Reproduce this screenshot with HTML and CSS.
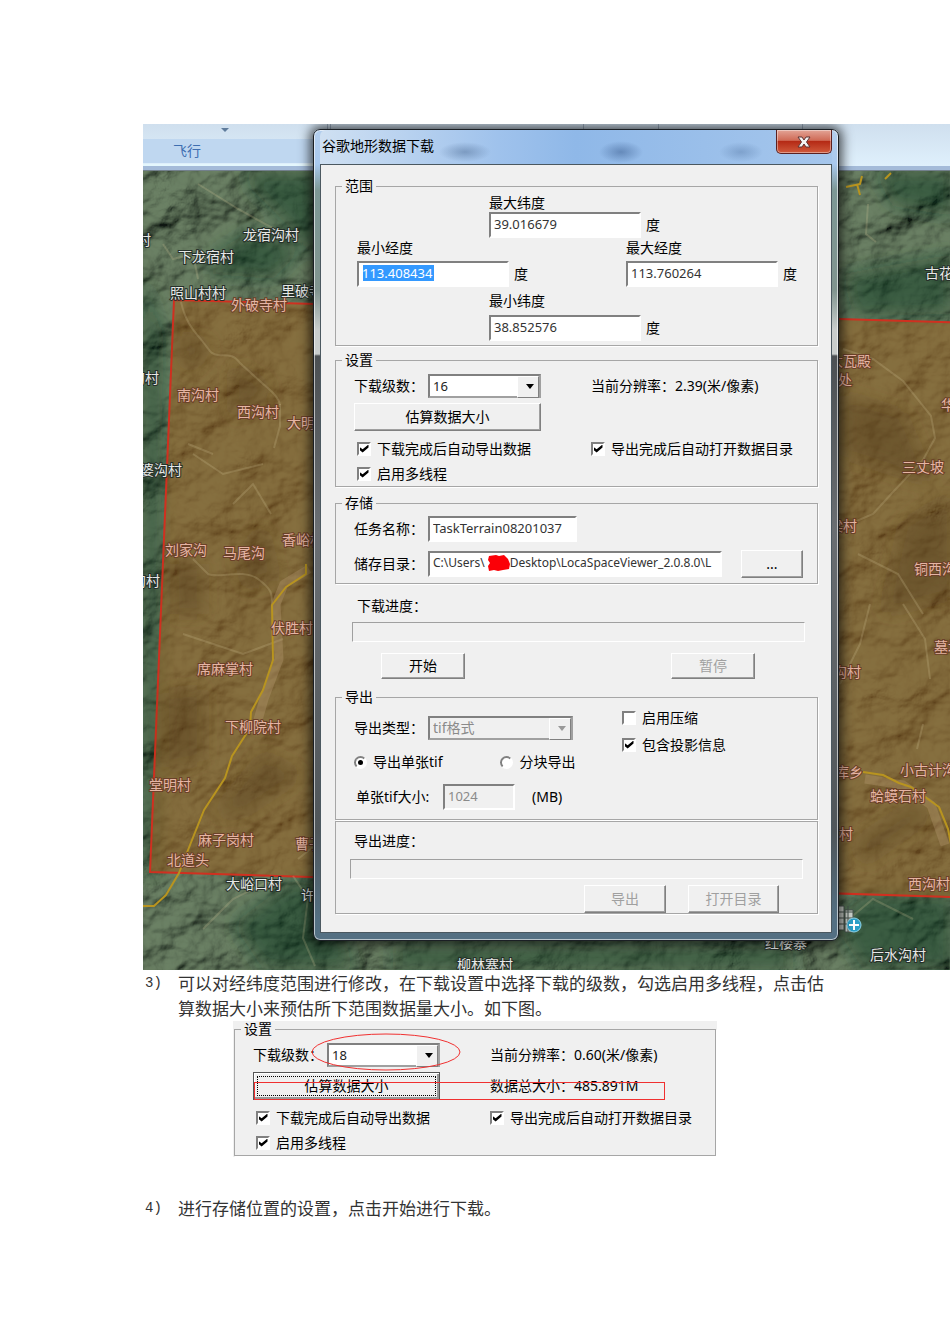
FILE: index.html
```html
<!DOCTYPE html>
<html lang="zh-CN">
<head>
    <meta charset="UTF-8">
    <meta name="viewport" content="width=device-width, initial-scale=1.0">
    <title>谷歌地形数据下载</title>
    <link rel="stylesheet" href="styles.css">
</head>
<body>
<main class="doc">
    <section class="desktop">
        <svg class="map" aria-hidden="true">
            <defs>
                <filter id="relief" x="0" y="0" width="100%" height="100%">
                    <feTurbulence type="fractalNoise" baseFrequency="0.018 0.022" numOctaves="4" seed="11"/>
                    <feColorMatrix values="0 0 0 0 0  0 0 0 0 0  0 0 0 0 0  1 0 0 0 0"/>
                    <feDiffuseLighting surfaceScale="17" lighting-color="#869a78">
                        <feDistantLight azimuth="225" elevation="50"/>
                    </feDiffuseLighting>
                </filter>
                <filter id="soft" x="-50%" y="-50%" width="200%" height="200%"><feGaussianBlur stdDeviation="9"/></filter>
                <linearGradient id="ribbon" x1="0" y1="0" x2="0" y2="1">
                    <stop offset="0" stop-color="#cfdfee"/>
                    <stop offset="1" stop-color="#dff0fc"/>
                </linearGradient>
            </defs>
            <rect width="100%" height="100%" filter="url(#relief)"/>
            <rect width="100%" height="100%" fill="#2f4a38" opacity=".3"/>
            <!-- forest patches -->
            <g fill="#0d3a22" opacity=".5" filter="url(#soft)">
                <path d="M100 47h80v90l-40-40-30-30z"/>
                <path d="M70 130l40-25 50 20-30 30-60-5z"/>
                <path d="M0 150l20 60-5 540H0z"/>
                <path d="M730 47h80v45l-60-10zM700 150l110-20v60l-100 2z"/>
                <path d="M90 800l60-45 40 10 20 80h-90z"/>
                <path d="M690 800l30-30h90v75h-90zM250 822h400v23H250z"/>
            </g>
            <!-- download range -->
            <path class="range" d="M31 176L1607 221V798L7 748z"/>
            <g fill="#4b3513" opacity=".4" filter="url(#soft)">
                <path d="M90 440l30-40 15 60zM90 240l40 25-40 30zM20 570l40-5v70l-40 10zM70 690l50-60 40 20-60 40z"/>
                <path d="M30 210l40 10-25 30zM30 440h30v50H30zM95 430l30 10-20 30z"/>
                <path d="M700 270l60 20 30 70-90-30zM760 400l50-30v100l-70 20zM710 720l60-40 20 10-70 50z"/>
            </g>
            <g class="ridge">
                <path d="M38 178c5 22 14 30 22 40s8 12 15 13 15-2 22 8l22 20c9 8 17 14 18 22"/>
                <path d="M137 280v22l-6 22M50 435l15 15c10 5 35-6 50 5s14 15 14 28"/>
                <path d="M155 735l15-12M20 120l10 15 20-5 5 25M55 60l40 25 40 22 20 10"/>
                <path d="M150 752l15 22-5 40 12 28M60 805l30-30 40-20"/>
                <path d="M700 225l30 10 30 22 28 35 4 22-12 22-30 32-20 22-35 15"/>
                <path d="M697 560l20-40 10-40M715 430l40 20 25 40M760 480l22 35 5 40"/>
                <path d="M725 80l-2 30 10 8M780 600l-6 25M700 800l30-25 40 20"/>
                <path d="M50 330l30 20 40-10M70 330l-25-10M90 380l20-20 18 30M40 510l60 20 40-15"/>
            </g>
            <g class="valley">
                <path d="M166 445l-25 15-8 20 3 55-15 40-10 35"/>
                <path d="M722 655l38 6 28 20 14 40"/>
            </g>
            <g class="road">
                <path d="M163 440v10l-20 13-14 18 1 55-10 30-12 22-1 16-18 28-7 22-21 32-14 35-11 28-13 22-12 11H0"/>
                <path d="M720 648l20 3 16 8 12 4 28 20 9 22 4 20"/>
                <path d="M703 63l14-3 2-8M714 60l3 11M742 55l6-6"/>
            </g>
            <!-- place names -->
            <g class="place">
                <text x="-6" y="121">村</text>
                <text x="100" y="116">龙宿沟村</text>
                <text x="35" y="138">下龙宿村</text>
                <text x="27" y="174">照山村村</text>
                <text x="138" y="172">里破寺</text>
                <text x="-12" y="259">沟村</text>
                <text x="-17" y="351">婆婆沟村</text>
                <text x="-11" y="462">沟村</text>
                <text x="83" y="765">大峪口村</text>
                <text x="158" y="776">许</text>
                <text x="314" y="846">柳林寨村</text>
                <text x="622" y="824">红楼寨</text>
                <text x="782" y="154">古花寨</text>
                <text x="727" y="836">后水沟村</text>
            </g>
            <g class="place inside">
                <text x="88" y="186">外破寺村</text>
                <text x="34" y="276">南沟村</text>
                <text x="94" y="293">西沟村</text>
                <text x="144" y="304">大明村</text>
                <text x="22" y="431">刘家沟</text>
                <text x="80" y="434">马尾沟</text>
                <text x="139" y="421">香峪村</text>
                <text x="128" y="509">伏胜村</text>
                <text x="54" y="550">席麻掌村</text>
                <text x="82" y="608">下柳院村</text>
                <text x="6" y="666">堂明村</text>
                <text x="55" y="721">麻子岗村</text>
                <text x="24" y="741">北道头</text>
                <text x="152" y="725">曹子</text>
                <text x="686" y="242">大瓦殿</text>
                <text x="695" y="261">处</text>
                <text x="798" y="286">华</text>
                <text x="759" y="348">三丈坡</text>
                <text x="686" y="407">梁村</text>
                <text x="771" y="450">铜西沟村</text>
                <text x="791" y="528">墓地</text>
                <text x="690" y="553">沟村</text>
                <text x="692" y="653">库乡</text>
                <text x="757" y="651">小古计沟村</text>
                <text x="727" y="677">蛤蟆石村</text>
                <text x="682" y="715">石村</text>
                <text x="765" y="765">西沟村</text>
            </g>
            <!-- zoom-in marker -->
            <path d="M694 782h7v24h-7zM702 786h8v22h-8z" fill="#cdd3cd" stroke="#47524c"/>
            <path d="M694 788h16M694 794h16M694 800h16M705 782v26" stroke="#47524c" fill="none"/>
            <circle cx="711" cy="801" r="7" fill="#2ba0c8" stroke="#8fd3e8"/>
            <path d="M711 796v10M706 801h10" stroke="#fff" stroke-width="2"/>
            <!-- ribbon of the main window -->
            <rect width="100%" height="42" fill="url(#ribbon)"/>
            <rect y="15" width="190" height="24" fill="#bfd7f0"/>
            <rect y="40" width="190" height="2" fill="#e4f7fd"/>
            <rect y="42" width="100%" height="5" fill="#a4bbd9"/>
            <rect y="46" width="100%" height="1" fill="#73808c"/>
            <path d="M78 4h8l-4 4z" fill="#5f7c9c"/>
            <path d="M184.500 0v5M187.500 0v5M440.500 0v5M515.500 0v5M659.500 0v5" stroke="#9fb0c4"/>
            <text class="tab" x="30" y="32">飞行</text>
        </svg>

        <div class="dialog" role="dialog" aria-label="谷歌地形数据下载">
            <header class="titlebar">
                <span class="title">谷歌地形数据下载</span>
                <button class="close" type="button" aria-label="关闭">
                    <svg width="14" height="12" viewBox="0 0 14 12"><path d="M1 1h4l2 3 2-3h4L9.500 6 13 11H9L7 8l-2 3H1l3.500-5z" fill="#f4f4f4" stroke="#5c3434"/></svg>
                </button>
            </header>
            <form class="panel">
                <fieldset class="group">
                    <legend>范围</legend>
                    <div class="bounds">
                        <label class="north" for="lat-max">最大纬度</label>
                        <div class="coord north"><input class="text" id="lat-max" value="39.016679"><span>度</span></div>
                        <label class="west" for="lon-min">最小经度</label>
                        <label class="east" for="lon-max">最大经度</label>
                        <div class="coord west"><input class="text selected" id="lon-min" value="113.408434"><span>度</span></div>
                        <div class="coord east"><input class="text" id="lon-max" value="113.760264"><span>度</span></div>
                        <label class="south" for="lat-min">最小纬度</label>
                        <div class="coord south"><input class="text" id="lat-min" value="38.852576"><span>度</span></div>
                    </div>
                </fieldset>

                <fieldset class="group settings">
                    <legend>设置</legend>
                    <div class="settings-grid">
                        <div class="row">
                            <label class="name" for="level">下载级数：</label>
                            <span class="combo"><select id="level"><option>16</option></select></span>
                        </div>
                        <span>当前分辨率：2.39(米/像素)</span>
                        <button class="btn estimate" type="button">估算数据大小</button>
                        <span></span>
                        <label class="check"><input type="checkbox" checked>下载完成后自动导出数据</label>
                        <label class="check"><input type="checkbox" checked>导出完成后自动打开数据目录</label>
                        <label class="check"><input type="checkbox" checked>启用多线程</label>
                    </div>
                </fieldset>

                <fieldset class="group storage">
                    <legend>存储</legend>
                    <div class="row">
                        <label class="name" for="task">任务名称：</label>
                        <input class="text" id="task" value="TaskTerrain08201037">
                    </div>
                    <div class="row">
                        <label class="name" for="folder">储存目录：</label>
                        <span class="folder">
                            <input class="text" id="folder" value="C:\Users\        Desktop\LocaSpaceViewer_2.0.8.0\L">
                            <svg class="scribble" width="24" height="18" viewBox="0 0 24 18"><path d="M2 2l7-1 3 1 5-1 4 4 2 5-1 5-6 1-5 1-4-1-5 1-1-5 2-3-2-3z" fill="#fb0007"/></svg>
                        </span>
                        <button class="btn browse" type="button">...</button>
                    </div>
                </fieldset>

                <section class="download">
                    <span class="caption">下载进度：</span>
                    <div class="bar" role="progressbar" aria-label="下载进度"></div>
                    <div class="actions">
                        <button class="btn" type="button">开始</button>
                        <button class="btn" type="button" disabled>暂停</button>
                    </div>
                </section>

                <fieldset class="group export">
                    <legend>导出</legend>
                    <div class="export-grid">
                        <div class="export-left">
                            <div class="row">
                                <label class="name" for="format">导出类型：</label>
                                <span class="combo wide off"><select id="format" disabled><option>tif格式</option></select></span>
                            </div>
                            <div class="row modes">
                                <label class="radio"><input type="radio" name="mode" checked>导出单张tif</label>
                                <label class="radio"><input type="radio" name="mode">分块导出</label>
                            </div>
                            <div class="row size">
                                <label for="size">单张tif大小:</label>
                                <input class="text" id="size" value="1024" disabled>
                                <span>(MB)</span>
                            </div>
                        </div>
                        <div class="export-right">
                            <label class="check"><input type="checkbox">启用压缩</label>
                            <label class="check"><input type="checkbox" checked>包含投影信息</label>
                        </div>
                    </div>
                </fieldset>

                <section class="group export-progress">
                    <span class="caption">导出进度：</span>
                    <div class="bar" role="progressbar" aria-label="导出进度"></div>
                    <div class="actions">
                        <button class="btn" type="button" disabled>导出</button>
                        <button class="btn" type="button" disabled>打开目录</button>
                    </div>
                </section>
            </form>
        </div>
    </section>

    <div class="step">
        <span class="num">3)</span>
        <p>可以对经纬度范围进行修改，在下载设置中选择下载的级数，勾选启用多线程，点击估算数据大小来预估所下范围数据量大小。如下图。</p>
    </div>

    <div class="excerpt">
        <fieldset class="group settings">
            <legend>设置</legend>
            <div class="settings-grid">
                <div class="row">
                    <label class="name" for="level2">下载级数：</label>
                    <span class="combo"><select id="level2"><option>18</option></select></span>
                </div>
                <span>当前分辨率：0.60(米/像素)</span>
                <button class="btn estimate focused" type="button">估算数据大小</button>
                <span>数据总大小：485.891M</span>
                <label class="check"><input type="checkbox" checked>下载完成后自动导出数据</label>
                <label class="check"><input type="checkbox" checked>导出完成后自动打开数据目录</label>
                <label class="check"><input type="checkbox" checked>启用多线程</label>
            </div>
        </fieldset>
        <!-- hand-drawn highlights -->
        <svg class="marks" aria-hidden="true">
            <ellipse cx="153" cy="31" rx="74" ry="18"/>
            <rect x="21.500" y="61.500" width="410" height="17"/>
        </svg>
    </div>

    <div class="step last">
        <span class="num">4)</span>
        <p>进行存储位置的设置，点击开始进行下载。</p>
    </div>
</main>
</body>
</html>
```
FILE: styles.css
```css
* {
    box-sizing: border-box;
}
body {
    margin: 0;
    background: #fff;
    color: #000;
    font-family: "Noto Sans", "Noto Sans CJK SC", sans-serif;
    font-size: 14px;
    line-height: 20px;
}
.doc {
    padding: 124px 0 100px 143px;
}

/* desktop with map and dialog */
.desktop {
    position: relative;
    padding: 5px 0 29px 170px;
    overflow: hidden;
}
.map {
    position: absolute;
    inset: 0;
    width: 100%;
    height: 100%;
}
.range {
    fill: #9a6224;
    fill-opacity: 0.58;
    stroke: #d03020;
    stroke-width: 2;
}
.ridge path {
    fill: none;
    stroke: #d8c79a;
    stroke-width: 2;
    opacity: 0.22;
}
.valley path {
    fill: none;
    stroke: #b79a72;
    stroke-width: 9;
    stroke-linejoin: round;
    opacity: 0.35;
}
.road path {
    fill: none;
    stroke: #b8941f;
    stroke-width: 2;
    stroke-linejoin: round;
}
.place {
    font-size: 14px;
    fill: #e6e8e6;
    stroke: #26302a;
    stroke-width: 2;
    paint-order: stroke;
}
.inside {
    fill: #e5b5a4;
    stroke: #6b4129;
}
.tab {
    font-size: 14px;
    fill: #3e6eb0;
}

/* dialog */
.dialog {
    position: relative;
    width: 526px;
    padding: 0 6px 7px;
    border: 1px solid #1b1f24;
    border-radius: 7px;
    background: linear-gradient(#b4cfee 0, #a9c9ef 34px, #7d9896 60px, #81948f 160px, #c9cdcc 200px, #c9cdcc 224px, #4c5053 226px, #6a6e72 400px, #50565a 700px, #547083 790px);
    box-shadow: inset 0 0 0 1px rgba(255, 255, 255, 0.6), 0 0 12px 3px rgba(0, 0, 0, 0.7);
}
.titlebar {
    display: flex;
    justify-content: space-between;
    height: 34px;
    background:
        radial-gradient(26px 10px at 145px 22px, rgba(80, 110, 150, 0.5), transparent),
        radial-gradient(22px 11px at 301px 22px, rgba(70, 105, 155, 0.6), transparent),
        radial-gradient(22px 10px at 421px 22px, rgba(95, 130, 175, 0.5), transparent),
        linear-gradient(90deg, #cfe0f2, #9fc2ec 35%, #8fb8e8 50%, #a5c6ec);
    border-radius: 6px 6px 0 0;
}
.title {
    padding: 6px 2px;
}
.close {
    display: flex;
    align-items: center;
    justify-content: center;
    width: 56px;
    height: 24px;
    padding: 0;
    border: 1px solid #5b2020;
    border-top: 0;
    border-radius: 0 0 5px 5px;
    background: linear-gradient(#e3a496, #cf6a56 45%, #b52a15 50%, #d05a3c);
    box-shadow: inset 0 0 0 1px rgba(255, 255, 255, 0.4);
}
.panel {
    padding: 14px 13px 18px 14px;
    border: 1px solid #4b5860;
    background: #f0f0f0;
}
.group {
    margin: 0;
    padding: 0;
    min-width: 0;
    border: 1px solid #a6a6a6;
    box-shadow: 1px 1px 0 #fff;
}
legend {
    margin-left: 6px;
    padding: 0 3px;
    line-height: 14px;
}

/* controls */
.text {
    height: 26px;
    padding: 0 3px 3px;
    border: 2px solid;
    border-color: #808080 #fff #fff #808080;
    background: #fff;
    color: #333;
    font: 13px/20px "Noto Sans", "Noto Sans CJK SC", sans-serif;
}
.text:disabled {
    background: #f0f0f0;
    color: #8a8a8a;
}
.text.selected {
    background: linear-gradient(#3399ff, #3399ff) 4px 2px / 71px 16px no-repeat #fff;
    color: #fff;
}
.btn {
    height: 26px;
    padding: 0;
    border: 1px solid;
    border-color: #fff #808080 #808080 #fff;
    background: #f0f0f0;
    box-shadow: inset -1px -1px 0 #a0a0a0;
    color: #000;
    font: inherit;
}
.btn:disabled {
    color: #a0a0a0;
}
.combo {
    position: relative;
    width: 113px;
    height: 24px;
}
.combo select {
    appearance: none;
    width: 100%;
    height: 100%;
    padding: 0 3px;
    border: 2px solid;
    border-color: #808080 #a0a0a0 #a0a0a0 #808080;
    border-radius: 0;
    background: #fff;
    color: #222;
    opacity: 1;
    font: 13px/20px "Noto Sans", "Noto Sans CJK SC", sans-serif;
}
.combo::before {
    content: "";
    position: absolute;
    top: 2px;
    right: 2px;
    width: 20px;
    height: calc(100% - 4px);
    border: 1px solid;
    border-color: #fff #808080 #808080 #fff;
    background: #f0f0f0;
}
.combo::after {
    content: "";
    position: absolute;
    top: 10px;
    right: 7px;
    border: 4px solid transparent;
    border-top: 5px solid #000;
    border-bottom: 0;
}
.combo.wide {
    width: 145px;
}
.combo.off select {
    background: #f0f0f0;
    color: #8a8a8a;
    font-size: 14px;
}
.combo.off::after {
    border-top-color: #999;
}
.check,
.radio {
    display: flex;
    align-items: center;
    gap: 6px;
}
.check input,
.radio input {
    appearance: none;
    display: grid;
    place-items: center;
    width: 14px;
    height: 14px;
    margin: 0;
    border: 2px solid;
    border-color: #808080 #fff #fff #808080;
    background: #fff;
}
.check input:checked::before {
    content: "";
    width: 9px;
    height: 8px;
    background: #000;
    clip-path: polygon(0 30%, 35% 60%, 100% 0, 100% 38%, 35% 100%, 0 68%);
}
.radio input {
    width: 13px;
    height: 13px;
    border-radius: 50%;
}
.radio input:checked::before {
    content: "";
    width: 5px;
    height: 5px;
    border-radius: 50%;
    background: #000;
}
.row {
    display: flex;
    align-items: center;
}
.name {
    width: 74px;
}
.caption {
    display: block;
}
.bar {
    height: 20px;
    border: 1px solid;
    border-color: #a0a0a0 #fff #fff #a0a0a0;
}

/* range */
.bounds {
    display: grid;
    grid-template-columns: 132px 137px 1fr;
    grid-template-rows: 19px 26px 23px 26px 28px 26px;
    align-items: center;
    padding: 0 0 4px 21px;
}
.coord {
    display: flex;
    align-items: center;
    gap: 5px;
}
.coord .text {
    width: 152px;
}
.north,
.south {
    grid-column: 2 / span 2;
}
.west {
    grid-column: 1 / span 2;
}
.east {
    grid-column: 3;
}
label.west,
label.east {
    grid-row: 3;
    align-self: start;
}
.coord.west,
.coord.east {
    grid-row: 4;
}

/* settings */
.settings {
    margin-top: 7px;
}
.settings-grid {
    display: grid;
    grid-template-columns: 237px 1fr;
    grid-template-rows: 24px 38px 25px 25px;
    align-items: center;
    padding: 7px 0 0 18px;
}
.estimate {
    width: 187px;
    height: 28px;
}
.settings .check {
    padding-left: 3px;
}
.settings .check:nth-child(even) {
    padding-left: 0;
}

/* storage */
.storage {
    margin-top: 9px;
}
.storage .row {
    padding-left: 18px;
}
.storage .row:nth-of-type(1) {
    margin: 6px 0 8px;
}
.storage .row:nth-of-type(2) {
    margin-bottom: 5px;
}
#task {
    width: 149px;
}
.folder {
    position: relative;
    display: flex;
    width: 294px;
}
.folder .text {
    width: 100%;
    padding-right: 0;
    font-size: 12px;
}
.scribble {
    position: absolute;
    left: 59px;
    top: 3px;
}
.browse {
    width: 62px;
    height: 28px;
    margin-left: 19px;
}

/* download progress */
.download {
    padding: 12px 13px 11px 17px;
}
.download .caption {
    margin: 0 0 6px 5px;
}
.download .actions {
    display: flex;
    justify-content: space-between;
    margin-top: 11px;
    padding: 0 50px 0 29px;
}
.download .btn {
    width: 84px;
}

/* export */
.export-grid {
    display: grid;
    grid-template-columns: 268px 1fr;
    padding-left: 18px;
}
.export-left {
    display: flex;
    flex-direction: column;
    gap: 10px;
    padding: 12px 0 9px;
}
.modes {
    height: 24px;
    gap: 58px;
}
.size {
    gap: 11px;
    padding-left: 2px;
}
.size label {
    width: 76px;
    white-space: nowrap;
}
.size span {
    margin-left: 6px;
}
#size {
    width: 72px;
}
.export-right .check {
    height: 27px;
}
.export-progress {
    margin-top: 1px;
    padding: 9px 14px 0;
}
.export-progress .caption {
    margin: 0 0 8px 4px;
}
.export-progress .actions {
    display: flex;
    justify-content: flex-end;
    gap: 22px;
    margin-top: 6px;
    padding-right: 24px;
}
.export-progress .btn {
    width: 82px;
    height: 28px;
}
.export-progress .btn:last-child {
    width: 91px;
}

/* text */
.step {
    display: flex;
    padding: 1px 120px 0 2px;
    font-size: 17px;
    line-height: 25px;
    color: #333;
}
.step p {
    margin: 0;
}
.num {
    flex: 0 0 33px;
    font-family: "Liberation Mono", monospace;
    font-size: 14px;
}
.last {
    margin-top: 38px;
}
.excerpt {
    position: relative;
    width: 484px;
    margin-left: 90px;
    padding: 1px 1px 1px;
    background: #f0f0f0;
}
.excerpt .settings {
    margin-top: 0;
}
.focused {
    border: 1px solid #555;
    box-shadow: inset 1px 1px 0 #fff, inset -2px -2px 0 #999;
    outline: 1px dotted #000;
    outline-offset: -5px;
}
.marks {
    position: absolute;
    inset: 0;
    width: 100%;
    height: 100%;
    fill: none;
    stroke: #f03030;
}
```
